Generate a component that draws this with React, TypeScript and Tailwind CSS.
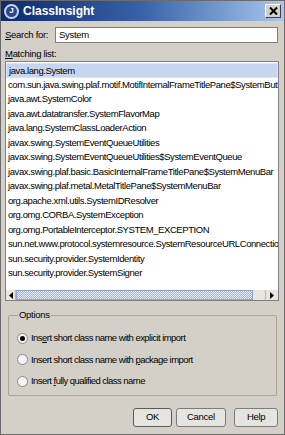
import React from 'react'

const matches = [
  'java.lang.System',
  'com.sun.java.swing.plaf.motif.MotifInternalFrameTitlePane$SystemButton',
  'java.awt.SystemColor',
  'java.awt.datatransfer.SystemFlavorMap',
  'java.lang.SystemClassLoaderAction',
  'javax.swing.SystemEventQueueUtilities',
  'javax.swing.SystemEventQueueUtilities$SystemEventQueue',
  'javax.swing.plaf.basic.BasicInternalFrameTitlePane$SystemMenuBar',
  'javax.swing.plaf.metal.MetalTitlePane$SystemMenuBar',
  'org.apache.xml.utils.SystemIDResolver',
  'org.omg.CORBA.SystemException',
  'org.omg.PortableInterceptor.SYSTEM_EXCEPTION',
  'sun.net.www.protocol.systemresource.SystemResourceURLConnection',
  'sun.security.provider.SystemIdentity',
  'sun.security.provider.SystemSigner',
]

function Radio({ checked, children }: { checked?: boolean; children: React.ReactNode }) {
  return (
    <div className="flex items-center gap-[3px] h-[14px]">
      <span className="w-[11px] h-[11px] rounded-full border border-[#8a8a8a] bg-[#f4f4f2] flex items-center justify-center">
        {checked && <span className="w-[5px] h-[5px] rounded-full bg-black" />}
      </span>
      <span className="tracking-[-0.55px]">{children}</span>
    </div>
  )
}

function Btn({ children, primary }: { children: React.ReactNode; primary?: boolean }) {
  return (
    <button
      className={`h-[19px] rounded-[3px] bg-[#e6e4de] text-black ${
        primary ? 'border-[1.5px] border-[#5a5a5a] w-[39px]' : 'border border-[#7c7c7c]'
      }`}
    >
      {children}
    </button>
  )
}

export default function App() {
  return (
    <div className="w-[285px] h-[435px] bg-[#d4d0c8] border border-[#6b6b6b] flex flex-col font-['Liberation_Sans',Arial,sans-serif] text-[9.5px] tracking-[-0.3px] text-black overflow-hidden">
      {/* title bar */}
      <div className="h-[20px] shrink-0 flex items-center pl-[3px] pr-[3px] bg-linear-to-r from-[#0c2a6e] via-[#3a62a8] to-[#a8c8ee]">
        <div className="w-[15px] h-[15px] rounded-full border-[2px] border-[#c9d6ea] bg-[#27478a] flex items-center justify-center text-white text-[8px] font-bold tracking-normal">
          J
        </div>
        <span className="ml-[4px] text-white font-bold text-[12px] tracking-normal">ClassInsight</span>
        <div className="ml-auto w-[16px] h-[14px] bg-[#d4d0c8] border border-t-white border-l-white border-r-[#404040] border-b-[#404040] flex items-center justify-center">
          <svg width="9" height="8" viewBox="0 0 9 8">
            <path d="M1 0.5 L8 7.5 M8 0.5 L1 7.5" stroke="#000" strokeWidth="2" />
          </svg>
        </div>
      </div>

      <div className="flex-1 flex flex-col px-[4px]">
        {/* search */}
        <div className="mt-[6px] flex items-center h-[16px]">
          <span className="w-[50px]">
            <span className="underline">S</span>earch for:
          </span>
          <div className="flex-1 h-[16px] bg-white border border-[#7f7f7f] flex items-center pl-[3px] mr-[2px]">
            System
          </div>
        </div>

        {/* list */}
        <div className="mt-[5px] h-[11px] leading-[11px]">
          <span className="underline">M</span>atching list:
        </div>
        <div className="mt-[2px] mr-[1px] h-[240px] border border-[#7f7f7f] bg-white flex flex-col">
          <div className="flex-1 overflow-hidden pt-[1px] tracking-[-0.42px]">
            {matches.map((m, i) => (
              <div
                key={m}
                className={`h-[14.5px] leading-[14px] pl-[2px] whitespace-nowrap overflow-hidden ${
                  i === 0 ? 'bg-[#c7d5ee] border border-[#dbe5f5]' : ''
                }`}
              >
                {m}
              </div>
            ))}
          </div>
          <div className="h-[10px] flex bg-[#e8e6e0]">
            <div className="w-[10px] flex items-center justify-center border-r border-[#b8b6b0]">
              <svg width="4" height="7" viewBox="0 0 4 7">
                <path d="M4 0 L0 3.5 L4 7 Z" fill="#000" />
              </svg>
            </div>
            <div className="w-[237px] bg-[repeating-conic-gradient(#97b2e2_0%_25%,#e6edf9_0%_50%)] bg-[length:2px_2px] border border-[#8fa6d2]" />
            <div className="flex-1" />
            <div className="w-[13px] flex items-center justify-center border-l border-[#b8b6b0]">
              <svg width="4" height="7" viewBox="0 0 4 7">
                <path d="M0 0 L4 3.5 L0 7 Z" fill="#000" />
              </svg>
            </div>
          </div>
        </div>

        {/* options */}
        <fieldset className="mt-[7px] mx-[3px] h-[88px] border border-[#a8a59c] rounded-[2px] px-[8px]">
          <legend className="px-[1px] ml-[1px]">Options</legend>
          <div className="mt-[9px] flex flex-col gap-[7.5px]">
            <Radio checked>
              Ins<span className="underline">e</span>rt short class name with explicit import
            </Radio>
            <Radio>
              Insert short class name with <span className="underline">p</span>ackage import
            </Radio>
            <Radio>
              Insert <span className="underline">f</span>ully qualified class name
            </Radio>
          </div>
        </fieldset>

        {/* buttons */}
        <div className="mt-[12px] flex justify-end gap-[4px] mr-[2px]">
          <Btn primary>OK</Btn>
          <div className="w-[54px] flex">
            <Btn>
              <span className="px-[10px]">Cancel</span>
            </Btn>
          </div>
          <div className="w-[44px] flex">
            <Btn>
              <span className="px-[12px]">Help</span>
            </Btn>
          </div>
        </div>
      </div>
    </div>
  )
}
